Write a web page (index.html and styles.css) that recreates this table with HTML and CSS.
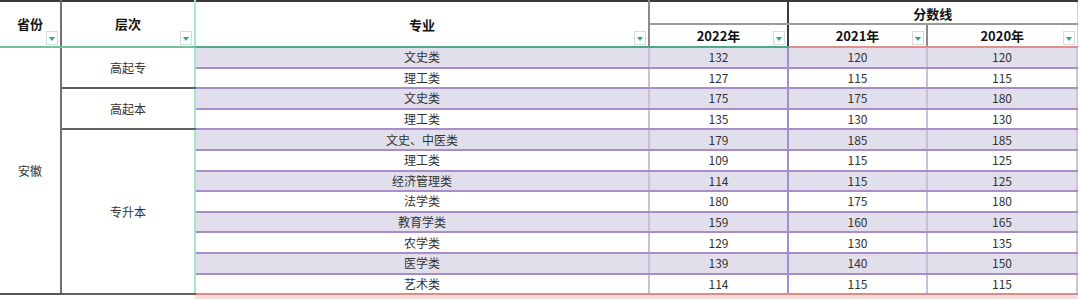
FILE: index.html
```html
<!DOCTYPE html>
<html lang="zh">
<head>
<meta charset="utf-8">
<link rel="stylesheet" href="styles.css">
</head>
<body>
<table class="sheet">
  <colgroup>
    <col class="c-prov"><col class="c-level"><col class="c-major"><col class="c-y"><col class="c-y"><col class="c-y3">
  </colgroup>
  <thead>
    <tr class="h1">
      <th rowspan="2" class="h-prov">省份<span class="dd"></span></th>
      <th rowspan="2" class="h-level">层次<span class="dd"></span></th>
      <th rowspan="2" class="h-major">专业<span class="dd"></span></th>
      <th class="h-blank"></th>
      <th colspan="2" class="h-score">分数线</th>
    </tr>
    <tr class="h2">
      <th class="h-2022">2022年<span class="dd"></span></th>
      <th class="h-2021">2021年<span class="dd"></span></th>
      <th class="h-2020">2020年<span class="dd"></span></th>
    </tr>
  </thead>
  <tbody>
    <tr class="odd"><td rowspan="12" class="prov">安徽</td><td rowspan="2" class="level">高起专</td><td class="m">文史类</td><td class="a">132</td><td class="b">120</td><td class="c">120</td></tr>
    <tr class="even"><td class="m">理工类</td><td class="a">127</td><td class="b">115</td><td class="c">115</td></tr>
    <tr class="odd"><td rowspan="2" class="level">高起本</td><td class="m">文史类</td><td class="a">175</td><td class="b">175</td><td class="c">180</td></tr>
    <tr class="even"><td class="m">理工类</td><td class="a">135</td><td class="b">130</td><td class="c">130</td></tr>
    <tr class="odd"><td rowspan="8" class="level lvl-last">专升本</td><td class="m">文史、中医类</td><td class="a">179</td><td class="b">185</td><td class="c">185</td></tr>
    <tr class="even"><td class="m">理工类</td><td class="a">109</td><td class="b">115</td><td class="c">125</td></tr>
    <tr class="odd"><td class="m">经济管理类</td><td class="a">114</td><td class="b">115</td><td class="c">125</td></tr>
    <tr class="even"><td class="m">法学类</td><td class="a">180</td><td class="b">175</td><td class="c">180</td></tr>
    <tr class="odd"><td class="m">教育学类</td><td class="a">159</td><td class="b">160</td><td class="c">165</td></tr>
    <tr class="even"><td class="m">农学类</td><td class="a">129</td><td class="b">130</td><td class="c">135</td></tr>
    <tr class="odd"><td class="m">医学类</td><td class="a">139</td><td class="b">140</td><td class="c">150</td></tr>
    <tr class="even last"><td class="m">艺术类</td><td class="a">114</td><td class="b">115</td><td class="c">115</td></tr>
  </tbody>
</table>
<div class="next-row"></div>
</body>
</html>
```

FILE: styles.css
```css
html, body {
  margin: 0;
  padding: 0;
  background: #ffffff;
  overflow: hidden;
}

body {
  font-family: "Noto Sans CJK SC", "DejaVu Sans", sans-serif;
  width: 1080px;
  height: 299px;
}

.sheet {
  border-collapse: collapse;
  table-layout: fixed;
  width: 1078px;
  border-top: 2px solid #3a3a3a;
}

.c-prov { width: 61px; }
.c-level { width: 134px; }
.c-major { width: 454px; }
.c-y { width: 139px; }
.c-y3 { width: 150px; }

th {
  position: relative;
  font-weight: bold;
  font-size: 13px;
  color: #111;
  padding: 0;
  text-align: center;
  line-height: 14px;
}

.h1 { height: 23px; }
.h2 { height: 23px; }

.h-prov {
  border-right: 2px solid #707070;
  border-bottom: 2px solid #6cc39c;
}
.h-level {
  border-right: 2px solid #a6e6cb;
  border-bottom: 2px solid #6cc39c;
}
.h-major {
  border-right: 2px solid #8a8a8a;
  border-bottom: 2px solid #4fa889;
  padding-top: 2px;
}
.h-blank {
  border-right: 2px solid #3a3a3a;
  border-bottom: 2px solid #9a9a9a;
}
.h-score {
  border-bottom: 2px solid #9a9a9a;
  border-right: 1px solid #d0d0d0;
  padding-top: 2px;
}
.h-2022 {
  border-right: 2px solid #3a3a3a;
  border-bottom: 2px solid #4fa889;
}
.h-2021 {
  border-right: 2px solid #8a8a8a;
  border-bottom: 2px solid #e0908a;
}
.h-2020 {
  border-right: 1px solid #d0d0d0;
  border-bottom: 2px solid #e0908a;
}

.dd {
  position: absolute;
  right: 2px;
  bottom: 1px;
  width: 12px;
  height: 14px;
  background: #ffffff;
  border: 1px solid #dadada;
  box-sizing: border-box;
}
.dd::after {
  content: "";
  position: absolute;
  left: 2px;
  top: 5px;
  border-left: 3.5px solid transparent;
  border-right: 3.5px solid transparent;
  border-top: 4px solid #22b07a;
}

td {
  font-size: 12px;
  color: #333;
  text-align: center;
  padding: 0;
  line-height: 14px;
}

tbody tr { height: 20.6px; }

.prov {
  background: #fff;
  border-right: 2px solid #707070;
  border-bottom: 2px solid #555;
}
.level {
  background: #fff;
  border-right: 2px solid #a6e6cb;
  border-bottom: 2px solid #606060;
}

.m, .a, .b, .c {
  border-bottom: 2px solid #a88dc8;
}
.m { border-right: 2px solid #c9bfda; }
.a { border-right: 2px solid #a88dc8; }
.b { border-right: 2px solid #c9bfda; }
.c { border-right: 2px solid #cdc4de; }

.odd .m, .odd .a, .odd .b, .odd .c {
  background: #e2dfed;
}
.even .m, .even .a, .even .b, .even .c {
  background: #ffffff;
}

.last .m, .last .a, .last .b, .last .c {
  border-bottom: 2px solid #e08a86;
}

.next-row {
  height: 4px;
  margin-left: 195px;
  width: 883px;
  background: #f6dcdc;
}
```
